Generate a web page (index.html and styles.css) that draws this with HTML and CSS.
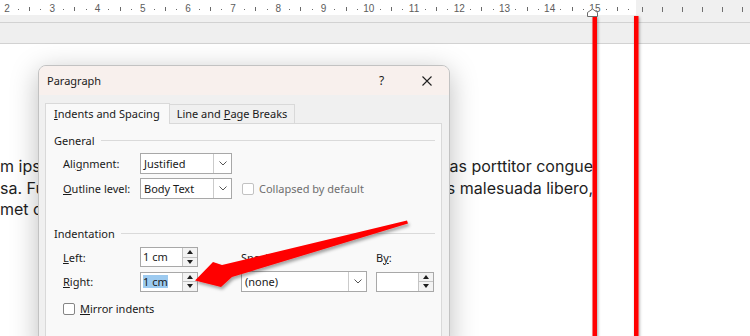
FILE: index.html
```html
<!DOCTYPE html>
<html>

<head>
    <link rel="stylesheet" href="styles.css">
</head>

<body>
    <div class="ruler">
        <div class="ruler-page">
            <div class="cm"><span class="num">2</span><span class="dot"></span><span class="tick"></span><span class="dot"></span></div>
            <div class="cm"><span class="num">3</span><span class="dot"></span><span class="tick"></span><span class="dot"></span></div>
            <div class="cm"><span class="num">4</span><span class="dot"></span><span class="tick"></span><span class="dot"></span></div>
            <div class="cm"><span class="num">5</span><span class="dot"></span><span class="tick"></span><span class="dot"></span></div>
            <div class="cm"><span class="num">6</span><span class="dot"></span><span class="tick"></span><span class="dot"></span></div>
            <div class="cm"><span class="num">7</span><span class="dot"></span><span class="tick"></span><span class="dot"></span></div>
            <div class="cm"><span class="num">8</span><span class="dot"></span><span class="tick"></span><span class="dot"></span></div>
            <div class="cm"><span class="num">9</span><span class="dot"></span><span class="tick"></span><span class="dot"></span></div>
            <div class="cm"><span class="num">10</span><span class="dot"></span><span class="tick"></span><span class="dot"></span></div>
            <div class="cm"><span class="num">11</span><span class="dot"></span><span class="tick"></span><span class="dot"></span></div>
            <div class="cm"><span class="num">12</span><span class="dot"></span><span class="tick"></span><span class="dot"></span></div>
            <div class="cm"><span class="num">13</span><span class="dot"></span><span class="tick"></span><span class="dot"></span></div>
            <div class="cm"><span class="num">14</span><span class="dot"></span><span class="tick"></span><span class="dot"></span></div>
            <div class="cm"><span class="num">15</span><span class="dot"></span><span class="tick"></span><span class="dot"></span></div>
        </div>
        <div class="ruler-out">
            <span></span><span></span><span></span><span></span><span></span><span></span>
        </div>
    </div>
    <div class="strip"></div>
    <div class="toolbar"></div>

    <div class="doc">
        <div class="doc-line"><span>m ipsum dolor sit amet,</span><span>egestas porttitor congue</span></div>
        <div class="doc-line"><span>sa. Fusce posuere,</span><span>dapibus malesuada libero,</span></div>
        <div class="doc-line"><span>met commodo magna.</span></div>
    </div>

    <div class="dialog">
        <div class="titlebar">
            <span class="title">Paragraph</span>
            <span class="tb-btn help">?</span>
            <span class="tb-btn">
                <svg width="10" height="10" viewBox="0 0 10 10"><path d="M0.5 0.5L9.5 9.5M9.5 0.5L0.5 9.5" stroke="#202020" stroke-width="1.1" fill="none"/></svg>
            </span>
        </div>
        <div class="dlg-body">
            <div class="tabs">
                <div class="tab active"><u>I</u>ndents and Spacing</div>
                <div class="tab">Line and <u>P</u>age Breaks</div>
            </div>
            <div class="panel">
                <div class="group-title"><span>General</span><i></i></div>
                <div class="general">
                    <label>Ali<u>g</u>nment:</label>
                    <div class="select w-short"><span>Justified</span><b class="drop"><svg width="8" height="5" viewBox="0 0 8 5"><path d="M0.5 0.5L4 4L7.5 0.5" stroke="#555" fill="none"/></svg></b></div>
                    <span></span>
                    <label><u>O</u>utline level:</label>
                    <div class="select w-short"><span>Body Text</span><b class="drop"><svg width="8" height="5" viewBox="0 0 8 5"><path d="M0.5 0.5L4 4L7.5 0.5" stroke="#555" fill="none"/></svg></b></div>
                    <div class="check disabled"><i class="box"></i>Collapsed by default</div>
                </div>

                <div class="group-title gap"><span>Indentation</span><i></i></div>
                <div class="indent">
                    <label><u>L</u>eft:</label>
                    <div class="spin"><span>1 cm</span><b class="arrows"><i class="up"></i><i class="down"></i></b></div>
                    <label>Spe<u>c</u>ial:</label>
                    <label>B<u>y</u>:</label>

                    <label><u>R</u>ight:</label>
                    <div class="spin"><span><em class="sel">1 cm</em></span><b class="arrows"><i class="up"></i><i class="down"></i></b></div>
                    <div class="select w-long"><span>(none)</span><b class="drop"><svg width="8" height="5" viewBox="0 0 8 5"><path d="M0.5 0.5L4 4L7.5 0.5" stroke="#555" fill="none"/></svg></b></div>
                    <div class="spin"><span></span><b class="arrows"><i class="up"></i><i class="down"></i></b></div>
                </div>

                <div class="check mirror"><i class="box"></i><span><u>M</u>irror indents</span></div>
            </div>
        </div>
    </div>

    <svg class="marks" width="750" height="336" viewBox="0 0 750 336">
        <defs>
            <filter id="lineShadow" filterUnits="userSpaceOnUse" x="0" y="0" width="750" height="336">
                <feDropShadow dx="1" dy="1" stdDeviation="1.6" flood-color="#000" flood-opacity="0.35"/>
            </filter>
            <filter id="arrowShadow" filterUnits="userSpaceOnUse" x="0" y="0" width="750" height="336">
                <feDropShadow dx="1.5" dy="2.5" stdDeviation="1.8" flood-color="#000" flood-opacity="0.35"/>
            </filter>
        </defs>
        <g fill="#ff0000" filter="url(#lineShadow)">
            <rect x="592.5" y="16" width="4.5" height="330"/>
            <rect x="634" y="16" width="4.5" height="330"/>
        </g>
        <polygon points="587.5,16.5 587.5,12.5 592.5,9 597.5,12.5 597.5,16.5" fill="#fff" stroke="#6b6b6b"/>
        <polygon fill="#ff0000" filter="url(#arrowShadow)"
            points="195,280.5 213,262 222,265 407,220.5 408,223.5 232,277 221,287"/>
    </svg>
</body>

</html>
```

FILE: styles.css
```css
body {
    margin: 0;
    width: 750px;
    height: 336px;
    overflow: hidden;
    position: relative;
    background: #fff;
    font-family: "Noto Sans", sans-serif;
}

/* ruler */

.ruler {
    display: flex;
    height: 15px;
}

.ruler-page {
    width: 636px;
    flex: none;
    display: flex;
    box-sizing: border-box;
    padding: 3px 0 0 1.4px;
    background: #fff;
}

.cm {
    width: 45.23px;
    flex: none;
    display: flex;
}

.cm span {
    flex: 1;
    display: flex;
    justify-content: center;
    align-items: center;
}

.num {
    font-family: "Liberation Sans", Arial, sans-serif;
    font-size: 10px;
    line-height: 1;
    color: #5c5c5c;
}

.dot::after {
    content: "";
    width: 1px;
    height: 1px;
    background: #6a6a6a;
}

.tick::after {
    content: "";
    width: 1px;
    height: 4px;
    background: #6a6a6a;
}

.ruler-out {
    flex: 1;
    display: flex;
    align-items: center;
    gap: 19px;
    padding: 3px 0 0 5.5px;
    background: #f0f0f0;
}

.ruler-out span {
    width: 1px;
    height: 5px;
    background: #707070;
}

.strip {
    height: 7px;
    background: #f0f0f0;
    border-bottom: 1px solid #d2d2d2;
}

.toolbar {
    height: 20px;
    background: #efefef;
    border-bottom: 1px solid #d2d2d2;
}

/* document */

.doc {
    padding: 112px 157px 0 0;
    font-family: Inter, "Liberation Sans", sans-serif;
    font-size: 16px;
    color: #1e1e1e;
}

.doc-line {
    display: flex;
    justify-content: space-between;
    height: 21.5px;
    line-height: 21.5px;
    white-space: nowrap;
}

/* dialog */

.dialog {
    position: absolute;
    left: 38px;
    top: 65px;
    width: 412px;
    height: 290px;
    box-sizing: border-box;
    display: flex;
    flex-direction: column;
    border: 1px solid #c2c2c2;
    border-radius: 8px 8px 0 0;
    background: #f0f0f0;
    box-shadow: 0 6px 28px rgba(0, 0, 0, 0.26);
    font-size: 11px;
    color: #1a1a1a;
}

.titlebar {
    height: 29px;
    flex: none;
    display: flex;
    align-items: center;
    background: #f8f0ed;
    border-radius: 7px 7px 0 0;
}

.title {
    flex: 1;
    padding-left: 8px;
}

.tb-btn {
    width: 45px;
    height: 29px;
    display: flex;
    align-items: center;
    justify-content: center;
}

.help {
    font-size: 12px;
}

.dlg-body {
    flex: 1;
    display: flex;
    flex-direction: column;
    padding: 8px 7px 0 6px;
}

.tabs {
    display: flex;
    align-items: flex-end;
    margin-bottom: -1px;
    position: relative;
    z-index: 1;
}

.tab {
    height: 18px;
    line-height: 18px;
    padding: 0 7px;
    border: 1px solid #d9d9d9;
    border-left: none;
    background: #f0f0f0;
}

.tab.active {
    height: 20px;
    line-height: 20px;
    padding: 0 9px 0 8px;
    border-left: 1px solid #d9d9d9;
    border-bottom: none;
    background: #f9f9f9;
}

.panel {
    flex: 1;
    padding: 9px 6px 0 8px;
    background: #f9f9f9;
    border: 1px solid #d9d9d9;
}

.group-title {
    display: flex;
    align-items: center;
    height: 15px;
    line-height: 15px;
}

.group-title i {
    flex: 1;
    height: 1px;
    margin-left: 6px;
    background: #dadada;
}

.group-title.gap {
    margin-top: 27px;
}

.general {
    display: grid;
    grid-template-columns: 77px 92px auto;
    grid-template-rows: 21px 21px;
    row-gap: 4px;
    align-items: center;
    margin-top: 5px;
    padding-left: 9px;
}

.indent {
    display: grid;
    grid-template-columns: 77px 101px 135px 58px;
    grid-template-rows: 20px 21px;
    row-gap: 4px;
    align-items: center;
    margin-top: 6px;
    padding-left: 9px;
}

.select {
    height: 21px;
    box-sizing: border-box;
    display: flex;
    border: 1px solid #a8a8a8;
    background: #fff;
}

.select span {
    flex: 1;
    padding-left: 3px;
    line-height: 19px;
}

.w-short {
    width: 92px;
}

.w-long {
    width: 126px;
}

.drop {
    width: 17px;
    display: flex;
    align-items: center;
    justify-content: center;
    border-left: 1px solid #cbcbcb;
}

.spin {
    width: 58px;
    height: 20px;
    box-sizing: border-box;
    display: flex;
    border: 1px solid #a8a8a8;
    background: #fff;
}

.spin span {
    flex: 1;
    padding-left: 2px;
    line-height: 18px;
}

.sel {
    display: inline-block;
    line-height: 13px;
    font-style: normal;
    background: #9ccaf0;
}

.arrows {
    width: 14px;
    display: flex;
    flex-direction: column;
    border-left: 1px solid #c4c4c4;
    background: #f3f3f3;
}

.arrows i {
    flex: 1;
    display: flex;
    align-items: center;
    justify-content: center;
}

.arrows .up {
    border-bottom: 1px solid #c4c4c4;
}

.arrows .up::after {
    content: "";
    border-left: 3.5px solid transparent;
    border-right: 3.5px solid transparent;
    border-bottom: 4px solid #1e1e1e;
}

.arrows .down::after {
    content: "";
    border-left: 3.5px solid transparent;
    border-right: 3.5px solid transparent;
    border-top: 4px solid #1e1e1e;
}

.check {
    display: flex;
    align-items: center;
    gap: 5px;
}

.check .box {
    width: 12px;
    height: 12px;
    box-sizing: border-box;
    border: 1px solid #858585;
    border-radius: 2px;
    background: #fff;
}

.check.disabled {
    margin-left: 10px;
    color: #6e6e6e;
}

.check.disabled .box {
    border-color: #c2c2c2;
}

.mirror {
    margin-top: 9px;
    padding-left: 9px;
    line-height: 15px;
}

.marks {
    position: absolute;
    left: 0;
    top: 0;
    pointer-events: none;
}
```
